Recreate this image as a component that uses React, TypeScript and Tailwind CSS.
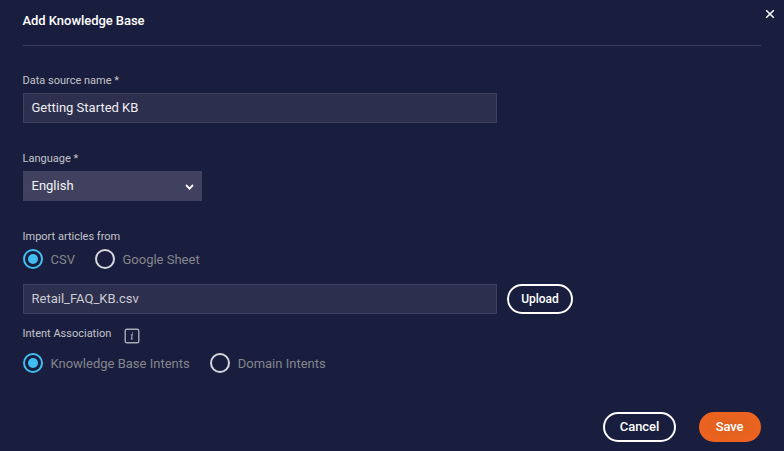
import React from "react";

function Label({ children }: { children: React.ReactNode }) {
  return (
    <label className="block h-4 text-[11px] leading-4 whitespace-nowrap text-[#c3c4ca]">{children}</label>
  );
}

function Radio({ label, checked = false }: { label: string; checked?: boolean }) {
  return (
    <div className="flex h-5 items-center gap-[7.5px]">
      <span
        className={
          checked
            ? "flex size-5 items-center justify-center rounded-full border-2 border-[#41bdf2]"
            : "flex size-5 items-center justify-center rounded-full border-2 border-[#d5d6de]"
        }
      >
        {checked && <span className="size-2.5 rounded-full bg-[#41bdf2]" />}
      </span>
      <span className="pt-px text-[13px] leading-5 whitespace-nowrap text-[#84858c]">{label}</span>
    </div>
  );
}

export default function App() {
  return (
    <div className="flex h-[451px] w-[784px] flex-col bg-[#1a1e3e] pr-[23px] pl-[22.5px] font-['Roboto',sans-serif] text-white">
      <header className="ml-[0.5px] flex h-[46px] shrink-0 justify-between border-b border-[#3a3b58]">
        <h1 className="-ml-[0.5px] pt-[11px] text-[13px] leading-5 font-medium tracking-[-0.05px]">Add Knowledge Base</h1>
        <button className="-mr-[14px] mt-[9px] size-[10px]" aria-label="Close">
          <svg viewBox="0 0 10 10" className="block size-[10px]" fill="none" stroke="white" strokeWidth="1.5">
            <path d="M1.2 1.2L8.8 8.8M8.8 1.2L1.2 8.8" />
          </svg>
        </button>
      </header>

      <main className="flex flex-col">
        <div className="pt-[27px]">
          <Label>Data source name *</Label>
          <div className="mt-[4px] ml-[0.5px] flex h-[30px] w-[474px] items-center border border-[#3f405e] bg-[#2d2f4e] px-[7.5px] text-[13px] text-[#eeeef1]">
            Getting Started KB
          </div>
        </div>

        <div className="pt-[28px]">
          <Label>Language *</Label>
          <div className="mt-[4px] ml-[0.5px] flex h-[30px] w-[179px] items-center justify-between bg-[#40415f] pr-2 pl-[8.5px] text-[13px] text-[#f3f3f5]">
            English
            <svg viewBox="0 0 9 6" className="mt-px h-[6px] w-[9px]" fill="none" stroke="white" strokeWidth="1.8">
              <path d="M1 1L4.5 4.6L8 1" />
            </svg>
          </div>
        </div>

        <div className="pt-[28px]">
          <Label>Import articles from</Label>
          <div className="mt-[4px] ml-[0.5px] flex gap-5">
            <Radio label="CSV" checked />
            <Radio label="Google Sheet" />
          </div>
          <div className="mt-[15px] ml-[0.5px] flex gap-[10px]">
            <div className="flex h-[30px] w-[474px] items-center border border-[#3f405e] bg-[#2d2f4e] px-[7.5px] text-[13px] text-[#cbccd2]">
              Retail_FAQ_KB.csv
            </div>
            <button className="h-[30px] w-[66px] rounded-full border-2 border-white text-[12px] font-medium">Upload</button>
          </div>
        </div>

        <div className="pt-[12px]">
          <div className="flex h-[19px] gap-[13px]">
            <Label>Intent Association</Label>
            <svg viewBox="0 0 16 16" className="mt-[2px] size-[16px]" fill="none" stroke="#a9aab6">
              <rect x="1.2" y="1.2" width="13.6" height="13.6" rx="1.6" strokeWidth="1.4" />
              <path d="M6.8 6.7H8.3L7.4 11H8.9M8.5 4.4V5.4" strokeWidth="1.1" />
            </svg>
          </div>
          <div className="mt-[8px] ml-[0.5px] flex gap-[20.5px]">
            <Radio label="Knowledge Base Intents" checked />
            <Radio label="Domain Intents" />
          </div>
        </div>
      </main>

      <footer className="mt-auto mb-[9px] flex justify-end gap-[23px]">
        <button className="h-[30px] w-[73px] rounded-full border-2 border-white text-[13px] font-medium tracking-[-0.08px]">Cancel</button>
        <button className="h-[30px] w-[62px] rounded-full bg-[radial-gradient(ellipse_at_center,#dc601f_0%,#eb631f_65%)] pr-px text-[13px] font-medium tracking-[-0.15px]">Save</button>
      </footer>
    </div>
  );
}
